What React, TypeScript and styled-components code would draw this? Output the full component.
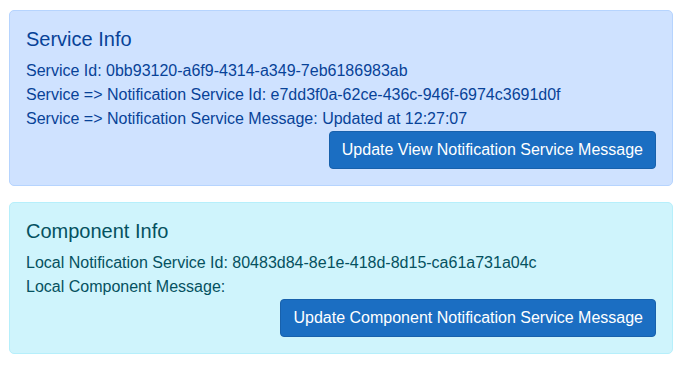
import React from "react";
import styled, { createGlobalStyle } from "styled-components";

const Global = createGlobalStyle`
  html, body { margin: 0; padding: 0; background: #fff; }
  body { font-family: "Liberation Sans", Arial, Helvetica, sans-serif; font-size: 16px; line-height: 1.5; }
  * { box-sizing: border-box; }
`;

const Page = styled.main`
  padding: 10px 9px;
  display: flex;
  flex-direction: column;
  gap: 16px;
`;

const palettes = {
  primary: { bg: "#cfe2ff", border: "#b6d4fe", color: "#084298" },
  info: { bg: "#cff4fc", border: "#b6effb", color: "#055160" },
};

const Alert = styled.section<{ $variant: "primary" | "info" }>`
  padding: 16px;
  border: 1px solid ${(p) => palettes[p.$variant].border};
  background: ${(p) => palettes[p.$variant].bg};
  color: ${(p) => palettes[p.$variant].color};
  border-radius: 5px;
  display: flex;
  flex-direction: column;
`;

const Title = styled.h5`
  margin: 0 0 8px;
  font-size: 20px;
  font-weight: 400;
  line-height: 1.2;
`;

const Line = styled.div`
  font-size: 16px;
  line-height: 24px;
`;

const Actions = styled.div`
  display: flex;
  justify-content: flex-end;
`;

const Button = styled.button`
  font-family: inherit;
  font-size: 16px;
  line-height: 24px;
  padding: 6px 12px;
  color: #fff;
  background: #1b6ec2;
  border: 1px solid #1861ac;
  border-radius: 4px;
  cursor: pointer;
`;

export default function App() {
  return (
    <>
      <Global />
      <Page>
        <Alert $variant="primary">
          <Title>Service Info</Title>
          <Line>Service Id: 0bb93120-a6f9-4314-a349-7eb6186983ab</Line>
          <Line>Service =&gt; Notification Service Id: e7dd3f0a-62ce-436c-946f-6974c3691d0f</Line>
          <Line>Service =&gt; Notification Service Message: Updated at 12:27:07</Line>
          <Actions>
            <Button>Update View Notification Service Message</Button>
          </Actions>
        </Alert>
        <Alert $variant="info">
          <Title>Component Info</Title>
          <Line>Local Notification Service Id: 80483d84-8e1e-418d-8d15-ca61a731a04c</Line>
          <Line>Local Component Message:</Line>
          <Actions>
            <Button>Update Component Notification Service Message</Button>
          </Actions>
        </Alert>
      </Page>
    </>
  );
}
